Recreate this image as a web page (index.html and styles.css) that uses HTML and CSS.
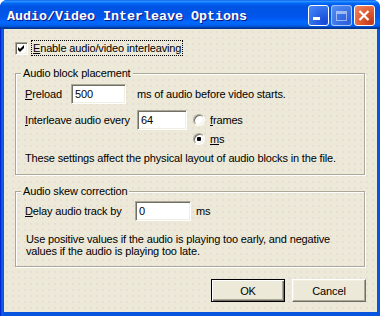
FILE: index.html
```html
<!DOCTYPE html>
<html lang="en-US"><head>
<meta charset="utf-8">
<link rel="stylesheet" href="styles.css">
<title>Audio/Video Interleave Options</title>
</head><body>
<div class="window">
<div class="titlebar">
	<span class="title">Audio/Video Interleave Options</span>
	<span class="caption-buttons">
		<span class="cap-btn min"><svg width="19" height="19"><rect x="4" y="11" width="7" height="3" fill="#fff"/></svg></span>
		<span class="cap-btn max"><svg width="19" height="19"><rect x="4.5" y="5.5" width="10" height="9" fill="none" stroke="rgba(255,255,255,0.5)"/><rect x="5" y="6" width="9" height="2" fill="rgba(255,255,255,0.5)"/></svg></span>
		<span class="cap-btn close"><svg width="19" height="19"><path d="M4.5 5 L13.5 14 M13.5 5 L4.5 14" stroke="#fff" stroke-width="2.2" fill="none"/></svg></span>
	</span>
</div>
<div class="client">
	<div class="check-row">
		<span class="checkbox"><svg width="11" height="11"><polygon points="2,4 4,6 8,2 8,5 4,9 2,7" fill="#000"/></svg></span>
		<span class="focus"><u>E</u>nable audio/video interleaving</span>
	</div>

	<div class="group group-block">
		<span class="legend">Audio block placement</span>
		<div class="row">
			<span class="lbl lbl-preload"><u>P</u>reload</span>
			<span class="edit edit-preload">500</span>
			<span>ms of audio before video starts.</span>
		</div>
		<div class="row row-interleave">
			<span class="lbl lbl-interleave"><u>I</u>nterleave audio every</span>
			<span class="edit edit-interleave">64</span>
			<div class="radios">
				<div class="radio-row"><span class="radio"></span><span><u>f</u>rames</span></div>
				<div class="radio-row"><span class="radio on"></span><span><u>m</u>s</span></div>
			</div>
		</div>
		<p class="note">These settings affect the physical layout of audio blocks in the file.</p>
	</div>

	<div class="group group-skew">
		<span class="legend">Audio skew correction</span>
		<div class="row">
			<span class="lbl lbl-delay"><u>D</u>elay audio track by</span>
			<span class="edit edit-delay">0</span>
			<span>ms</span>
		</div>
		<p class="note note-skew">Use positive values if the audio is playing too early, and negative<br>values if the audio is playing too late.</p>
	</div>

	<div class="buttons">
		<span class="btn btn-default">OK</span>
		<span class="btn">Cancel</span>
	</div>
</div>
</div>
</body></html>
```
FILE: styles.css
```css
body {
	margin : 0 ;
	background : #fff ;
	font-family : "Liberation Sans", Arial, sans-serif ;
	font-size : 11px ;
	letter-spacing : -0.15px ;
	color : #000 ;
	}
.window {
	width : 380px ;
	height : 316px ;
	display : flex ;
	flex-direction : column ;
	background : linear-gradient( to right, #0019cf 0, #0831d9 1px, #166aee 2px, #0855dd 3px ) ;
	border-radius : 7px 7px 0 0 ;
	overflow : hidden ;
	}

/* title bar */
.titlebar {
	height : 29px ;
	flex : none ;
	display : flex ;
	align-items : flex-start ;
	background : linear-gradient( #0058ee 0%, #3593ff 4%, #288eff 6%, #127dff 8%, #036ffc 10%, #0262ee 14%, #0057e5 20%, #0054e3 24%, #0055eb 56%, #005bf5 66%, #026afe 76%, #0062ef 86%, #0052d6 92%, #0040ab 94%, #003092 100% ) ;
	}
.title {
	padding : 9px 0 0 7px ;
	font : bold 13.33px/16px "Liberation Mono", monospace ;
	letter-spacing : 0 ;
	color : #fff ;
	text-shadow : 1px 1px #0a1883 ;
	white-space : nowrap ;
	}
.caption-buttons {
	margin-left : auto ;
	display : flex ;
	gap : 2px ;
	padding : 5px 5px 0 0 ;
	}
.cap-btn {
	width : 21px ;
	height : 21px ;
	box-sizing : border-box ;
	border : 1px solid #fff ;
	border-radius : 3px ;
	background : radial-gradient( circle at 85% 85%, #1848d8 0%, #2a66e8 45%, #4a8af6 100% ) ;
	}
.cap-btn svg {
	display : block ;
	}
.cap-btn.max {
	border-color : rgba( 255, 255, 255, 0.55 ) ;
	background : radial-gradient( circle at 85% 85%, #2d5fdc 0%, #3a71e6 45%, #5690f2 100% ) ;
	}
.cap-btn.close {
	background : radial-gradient( circle at 85% 85%, #c23a18 0%, #e0582f 45%, #f08b68 100% ) ;
	}

/* client area */
.client {
	flex : 1 ;
	margin : 0 3px 4px 4px ;
	padding : 11px 11px 10px ;
	display : flex ;
	flex-direction : column ;
	background-color : #ece9d8 ;
	background-image : radial-gradient( circle, #e8d9d3 0.6px, transparent 1px ) ;
	background-size : 6px 6px ;
	}
u {
	text-decoration : underline ;
	text-underline-offset : 1px ;
	}

.check-row {
	height : 16px ;
	display : flex ;
	align-items : center ;
	}
.checkbox {
	width : 13px ;
	height : 13px ;
	box-sizing : border-box ;
	margin-right : 3px ;
	background : #fff ;
	border : 1px solid ;
	border-color : #aca899 #fff #fff #aca899 ;
	box-shadow : inset 1px 1px #716f64, inset -1px -1px #f1efe2 ;
	}
.checkbox svg {
	display : block ;
	}
.focus {
	border : 1px dotted #000 ;
	padding : 0 1px ;
	line-height : 14px ;
	}

/* group boxes */
.group {
	position : relative ;
	margin-right : 1px ;
	border : 1px solid #aca899 ;
	box-shadow : 1px 1px 0 #fff, inset 1px 1px 0 #fff ;
	padding : 0 9px ;
	}
.legend {
	position : absolute ;
	top : -7px ;
	left : 5px ;
	padding : 0 2px ;
	line-height : 13px ;
	background : #ece9d8 ;
	}
.group-block {
	margin-top : 17px ;
	padding-top : 10px ;
	padding-bottom : 10px ;
	}
.group-skew {
	margin-top : 16px ;
	padding-top : 9px ;
	padding-bottom : 9px ;
	}

.row {
	height : 20px ;
	display : flex ;
	align-items : center ;
	}
.row-interleave {
	height : auto ;
	margin-top : 6px ;
	align-items : flex-start ;
	}
.lbl {
	flex : none ;
	line-height : 20px ;
	}
.lbl-preload { width : 46px }
.lbl-interleave { width : 112px }
.lbl-delay { width : 110px }

.edit {
	height : 20px ;
	box-sizing : border-box ;
	padding : 0 3px ;
	line-height : 18px ;
	background : #fff ;
	border : 1px solid ;
	border-color : #aca899 #fff #fff #aca899 ;
	box-shadow : inset 1px 1px #716f64, inset -1px -1px #f1efe2 ;
	}
.edit-preload {
	width : 55px ;
	margin-right : 11px ;
	}
.edit-interleave {
	width : 50px ;
	margin-right : 6px ;
	}
.edit-delay {
	width : 56px ;
	margin-right : 5px ;
	}

.radios {
	display : flex ;
	flex-direction : column ;
	}
.radio-row {
	height : 19px ;
	display : flex ;
	align-items : center ;
	}
.radio {
	position : relative ;
	width : 12px ;
	height : 12px ;
	box-sizing : border-box ;
	margin-right : 5px ;
	border-radius : 50% ;
	background : #fff ;
	border : 1px solid ;
	border-color : #aca899 #fff #fff #aca899 ;
	box-shadow : inset 1px 1px #716f64, inset -1px -1px #f1efe2 ;
	}
.radio.on::after {
	content : "" ;
	position : absolute ;
	left : 3px ;
	top : 3px ;
	width : 4px ;
	height : 4px ;
	border-radius : 1px ;
	background : #000 ;
	}

.note {
	margin : 4px 0 0 ;
	line-height : 12px ;
	}
.note-skew {
	margin-top : 12px ;
	padding-left : 1px ;
	}

/* dialog buttons */
.buttons {
	margin-top : 12px ;
	display : flex ;
	justify-content : flex-end ;
	gap : 7px ;
	}
.btn {
	width : 74px ;
	height : 23px ;
	box-sizing : border-box ;
	display : flex ;
	align-items : center ;
	justify-content : center ;
	background : #ece9d8 ;
	border : 1px solid ;
	border-color : #fff #716f64 #716f64 #fff ;
	box-shadow : inset -1px -1px #aca899, inset 1px 1px #f1efe2 ;
	}
.btn-default {
	border-color : #000 ;
	box-shadow : inset 1px 1px #fff, inset -1px -1px #716f64, inset -2px -2px #aca899 ;
	}
```
